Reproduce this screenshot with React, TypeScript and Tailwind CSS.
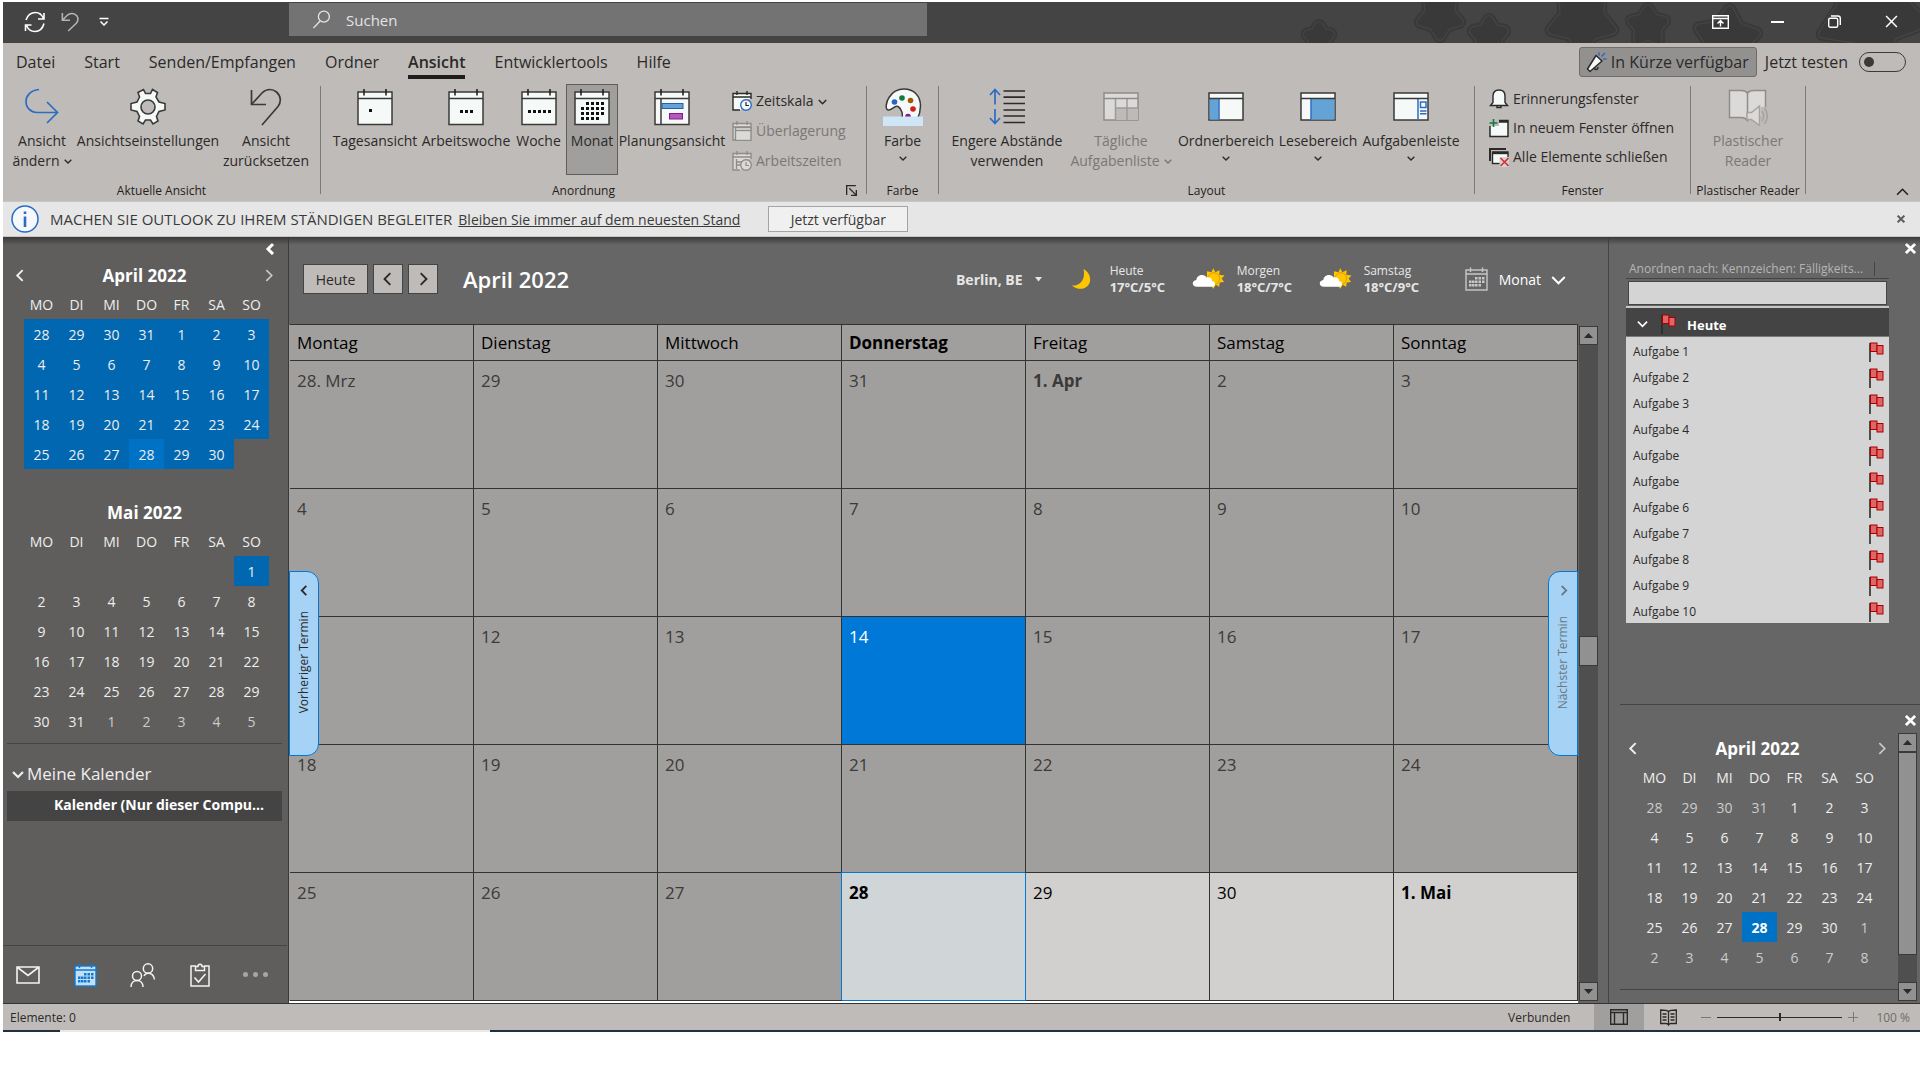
import type { ReactNode } from "react";

const WEEKDAYS_SHORT = ["MO", "DI", "MI", "DO", "FR", "SA", "SO"];
const WEEKDAYS = ["Montag", "Dienstag", "Mittwoch", "Donnerstag", "Freitag", "Samstag", "Sonntag"];

const APRIL = [
  ["28", "29", "30", "31", "1", "2", "3"],
  ["4", "5", "6", "7", "8", "9", "10"],
  ["11", "12", "13", "14", "15", "16", "17"],
  ["18", "19", "20", "21", "22", "23", "24"],
  ["25", "26", "27", "28", "29", "30", ""],
];

const APRIL_FULL = [
  ...APRIL.slice(0, 4),
  ["25", "26", "27", "28", "29", "30", "1"],
  ["2", "3", "4", "5", "6", "7", "8"],
];

const MAI = [
  ["", "", "", "", "", "", "1"],
  ["2", "3", "4", "5", "6", "7", "8"],
  ["9", "10", "11", "12", "13", "14", "15"],
  ["16", "17", "18", "19", "20", "21", "22"],
  ["23", "24", "25", "26", "27", "28", "29"],
  ["30", "31", "1", "2", "3", "4", "5"],
];

const MONTH = [
  ["28. Mrz", "29", "30", "31", "1. Apr", "2", "3"],
  ["4", "5", "6", "7", "8", "9", "10"],
  ["11", "12", "13", "14", "15", "16", "17"],
  ["18", "19", "20", "21", "22", "23", "24"],
  ["25", "26", "27", "28", "29", "30", "1. Mai"],
];

const TASKS = [
  "Aufgabe 1",
  "Aufgabe 2",
  "Aufgabe 3",
  "Aufgabe 4",
  "Aufgabe",
  "Aufgabe",
  "Aufgabe 6",
  "Aufgabe 7",
  "Aufgabe 8",
  "Aufgabe 9",
  "Aufgabe 10",
];

/* ---------- ICONS ---------- */

function Chevron({ dir, size = 12, width = 2 }: { dir: "left" | "right" | "down" | "up"; size?: number; width?: number }) {
  const paths = {
    left: "M8 1 L3 6 L8 11",
    right: "M4 1 L9 6 L4 11",
    down: "M1 4 L6 9 L11 4",
    up: "M1 9 L6 4 L11 9",
  };
  return (
    <svg width={size} height={size} viewBox="0 0 12 12" fill="none" stroke="currentColor" strokeWidth={width}>
      <path d={paths[dir]} />
    </svg>
  );
}

function CloseIcon({ size = 11, width = 3 }: { size?: number; width?: number }) {
  return (
    <svg width={size} height={size} viewBox="0 0 12 12" stroke="currentColor" strokeWidth={width}>
      <path d="M1 1 L11 11 M11 1 L1 11" />
    </svg>
  );
}

function CalendarFrame({ children }: { children?: ReactNode }) {
  return (
    <svg width="36" height="38" viewBox="0 0 36 38">
      <rect x="1" y="4" width="34" height="32.5" fill="#f5f9f8" stroke="#3b3a39" strokeWidth="1.5" />
      <path d="M1 10.5 H35" stroke="#3b3a39" strokeWidth="1.5" />
      <path d="M7 1 V7.5 M29 1 V7.5" stroke="#1b1a19" strokeWidth="1.5" />
      {children}
    </svg>
  );
}

function Dots({ points }: { points: number[][] }) {
  return (
    <>
      {points.map(([x, y]) => (
        <rect key={`${x}-${y}`} x={x} y={y} width="3" height="3" fill="#111" />
      ))}
    </>
  );
}

const MONTH_DOTS = [
  [12, 14], [17, 14], [22, 14], [27, 14],
  [7, 19], [12, 19], [17, 19], [22, 19], [27, 19],
  [7, 24], [12, 24], [17, 24], [22, 24], [27, 24],
  [7, 29], [12, 29], [17, 29], [22, 29],
];

function ChangeViewIcon() {
  return (
    <svg width="36" height="38" viewBox="0 0 36 38" fill="none" stroke="#2b6cc4" strokeWidth="1.7">
      <path d="M15 1.5 C6 2.5 2 8 2 13.5 C2 20 7 24.5 13 24.5 H33" />
      <path d="M23 14 L33.5 24.5 L23 35" />
    </svg>
  );
}

function GearIcon() {
  return (
    <svg width="36" height="38" viewBox="0 0 36 38" fill="#f5f9f8" stroke="#3b3a39" strokeWidth="1.6">
      <path d="M13.5 1.5 L15.5 5.5 H20.5 L22.5 1.5 L27.5 4.5 L26 9 L29 14 L35 15.5 V22 L29 23.5 L26.5 28.5 L28 33 L23 36 L20.5 32 H15.5 L13 36 L8 33 L9.5 28.5 L7 23.5 L1 22 V15.5 L7 14 L9.5 9 L8 4.5 Z" />
      <circle cx="18" cy="19" r="7" fill="#bfbbb8" />
    </svg>
  );
}

function ResetIcon() {
  return (
    <svg width="36" height="38" viewBox="0 0 36 38" fill="none" stroke="#3b3a39" strokeWidth="1.7">
      <path d="M3.5 2 V16.5 H18" />
      <path d="M3.5 16.5 L14 5 C19 0 25 1 28.5 4 C33 8 33.5 14 30 18.5 L14 37" />
    </svg>
  );
}

function PaletteIcon() {
  return (
    <svg width="40" height="38" viewBox="0 0 40 38">
      <path
        d="M5 22 C2 21 3 14 6 9.5 C10 3 16 1 21 1 C31 1 37.5 8 37.5 18 C37.5 24 36 28 34 32 H18 C21 27 19 21 15 18.5 C11 17 9 23 5 22 Z"
        fill="#f5f9f8"
        stroke="#3b3a39"
        strokeWidth="1.5"
      />
      <circle cx="11.5" cy="14" r="2.8" fill="#2b62c4" />
      <circle cx="19" cy="10" r="2.8" fill="#107c41" />
      <circle cx="27.5" cy="12.5" r="2.8" fill="#a05a00" />
      <circle cx="30" cy="21" r="2.8" fill="#d0201a" />
      <circle cx="25" cy="28.5" r="2.8" fill="#881798" />
      <rect x="0" y="28.5" width="40" height="9.5" fill="#cfe6f7" />
    </svg>
  );
}

function SpacingIcon() {
  return (
    <svg width="36" height="38" viewBox="0 0 36 38" fill="none" strokeWidth="1.7">
      <path d="M14.5 3 H36 M14.5 9.2 H36 M14.5 15.5 H36 M14.5 22 H36 M14.5 28 H36 M14.5 34.5 H36" stroke="#2b2a29" />
      <path d="M6 2 V16.5 M1 7 L6 1.5 L11 7 M6 21 V35.5 M1 30 L6 35.5 L11 30" stroke="#2b6cc4" />
    </svg>
  );
}

function PaneIcon({ children, muted }: { children?: ReactNode; muted?: boolean }) {
  const stroke = muted ? "#8f8d8b" : "#3b3a39";
  return (
    <svg width="36" height="38" viewBox="0 0 36 38">
      <rect x="1" y="5" width="34" height="27" fill={muted ? "#dcdad8" : "#f5f9f8"} stroke={stroke} strokeWidth="1.5" />
      {children}
      <path d="M1 10.5 H35" stroke={stroke} strokeWidth="1.5" />
    </svg>
  );
}

function ReaderIcon() {
  return (
    <svg width="40" height="38" viewBox="0 0 40 38" fill="#dcdad8" stroke="#8f8d8b" strokeWidth="1.5">
      <path d="M19.5 5 C18 3 16 2.5 13 2.5 H1.5 V29.5 H13 C16 29.5 18 30.5 19.5 32.5 C20.5 30.5 23 29.5 26 29.5 H37.5 V2.5 H26 C23 2.5 21 3 19.5 5 Z" />
      <path d="M19.5 5 V32" />
      <path d="M19 24.5 H23.5 L31.5 18 V37.5 L23.5 31.5 H19 Z" stroke="#a5a3a1" />
      <path d="M32.5 19 H40 V37.500 H32.5 Z" fill="#bfbbb8" stroke="none" />
      <path d="M34 23 C36 26 36 30 34 33 M36.5 20 C40 25 40 31 36.5 36" fill="none" stroke="#a5a3a1" />
    </svg>
  );
}

function SmallCalendar({ muted, clock, second }: { muted?: boolean; clock?: boolean; second?: boolean }) {
  const stroke = muted ? "#8f8d8b" : "#2b2a29";
  const fill = muted ? "#dcdad8" : "#f5f9f8";
  return (
    <svg width="20" height="20" viewBox="0 0 20 20" fill="none" stroke={stroke} strokeWidth="1.4">
      <path d="M1 2.5 H19 V19 H1 Z" fill={fill} stroke="none" />
      <path d="M19 8 V2.5 H1 V19 H8 M1 6 H19 M5 0 V4 M15 0 V4" />
      {second && (
        <>
          <rect x="3.5" y="6.5" width="15.5" height="13" fill={fill} />
          <path d="M3.5 9.5 H19" />
        </>
      )}
      {!second && !clock && <path d="M4.5 8 V18 M5 11 H10 M5 14 H9" />}
      {!second && <path d="M9 20 V15 L13 8 H20 V20 Z" fill="#bfbbb8" stroke="none" />}
      {!second && <circle cx="14" cy="14" r="5.3" fill={fill} stroke={muted ? "#8f8d8b" : "#2b6cc4"} />}
      {!second && <path d="M14 11 V14.5 H17" strokeWidth="1.2" />}
    </svg>
  );
}

function BellIcon() {
  return (
    <svg width="20" height="20" viewBox="0 0 20 20" fill="#f5f9f8" stroke="#2b2a29" strokeWidth="1.4">
      <path d="M1.5 16.5 L4 13.5 V7 C4 3 6.5 1 10 1 C13.5 1 16 3 16 7 V13.5 L18.5 16.5 Z" />
      <path d="M8 17 V18.5 H12 V17" fill="none" />
    </svg>
  );
}

function NewWindowIcon() {
  return (
    <svg width="20" height="20" viewBox="0 0 20 20">
      <path d="M1 8 V18.5 H19 V2.5 H10 V8 Z" fill="#f5f9f8" />
      <path d="M1 8 V18.5 H19 V2.5 H10" fill="none" stroke="#2b2a29" strokeWidth="1.5" />
      <path d="M10 3.5 H19" stroke="#2b2a29" strokeWidth="2.5" />
      <path d="M4.5 1 V9 M0.5 5 H8.5" stroke="#107c41" strokeWidth="1.6" />
    </svg>
  );
}

function CloseAllIcon() {
  return (
    <svg width="20" height="20" viewBox="0 0 20 20" fill="none">
      <path d="M1 14 V2 H17" stroke="#2b2a29" strokeWidth="2" />
      <rect x="3.5" y="5" width="15.5" height="11.5" fill="#f5f9f8" stroke="#2b2a29" strokeWidth="1.4" />
      <path d="M3.5 6 H19" stroke="#2b2a29" strokeWidth="2.4" />
      <path d="M10.5 10 H20 V20 H10.5 Z" fill="#d5d2d0" />
      <path d="M11.5 11 L19.5 19 M19.5 11 L11.5 19" stroke="#d13438" strokeWidth="1.6" />
    </svg>
  );
}

function FlagIcon() {
  return (
    <svg width="15" height="20" viewBox="0 0 15 20">
      <path d="M1 1 V20" stroke="#2b2a29" strokeWidth="1.6" />
      <rect x="1.5" y="1" width="6.5" height="8.5" fill="#e06666" stroke="#a80000" />
      <rect x="8" y="3.5" width="6" height="8.5" fill="#e06666" stroke="#a80000" />
    </svg>
  );
}

function MoonIcon() {
  return (
    <svg width="20" height="22" viewBox="0 0 20 22">
      <path d="M12.5 1 C18 4 20.5 10 18.5 15 C16 21.5 7 23 1 17.5 C8 18.5 15 12 12.5 1 Z" fill="#ffc600" />
    </svg>
  );
}

function SunCloudIcon() {
  return (
    <svg width="34" height="22" viewBox="0 0 34 22">
      <path
        d="M22 0 L24 4 L28.5 2 L28 6.5 L33.5 7.5 L30.5 10.5 L33 14 L28.5 14.5 L28 19 L24.5 17 L22 21 L19 17 L15 18 L15.5 3 L20 4 Z"
        fill="#ffc600"
      />
      <circle cx="22.5" cy="10.5" r="6" fill="#ffc600" stroke="#d99a00" strokeWidth="1" />
      <path d="M5 19 C0 19 -1 13 4.5 12 C5 7 12 5 15 9.5 C19 8.5 21 11.5 20.5 13 C25 13.5 24.5 19 21 19 Z" fill="#fff" />
    </svg>
  );
}

function CalendarSmallGrid({ color, fill }: { color: string; fill: string }) {
  const cells = [
    [10, 10], [13.5, 10], [17, 10],
    [4, 13.5], [7, 13.5], [10, 13.5], [13.5, 13.5], [17, 13.5],
    [4, 17], [7, 17], [10, 17], [13.5, 17],
  ];
  return (
    <svg width="23" height="24" viewBox="0 0 23 24">
      <rect x="1" y="3" width="21" height="20" fill={fill} stroke={color} strokeWidth="1.4" />
      <path d="M1 7 H22 M5.5 0.5 V5 M17.5 0.5 V5" stroke={color} strokeWidth="1.4" />
      {cells.map(([x, y]) => (
        <rect key={`${x}-${y}`} x={x} y={y} width="2.5" height="2.5" fill={color} />
      ))}
    </svg>
  );
}

function starPoints(cx: number, cy: number, r: number, turn: number) {
  return Array.from({ length: 10 }, (_, i) => {
    const radius = i % 2 ? r * 0.58 : r;
    const angle = (Math.PI / 5) * i - Math.PI / 2 + (turn * Math.PI) / 180;
    return `${(cx + radius * Math.cos(angle)).toFixed(1)},${(cy + radius * Math.sin(angle)).toFixed(1)}`;
  }).join(" ");
}

const STARS = [
  [59, 36, 12, 0],
  [180, 14, 20, 36],
  [229, 34, 16, 0],
  [322, 18, 32, 36],
  [388, 24, 17, 0],
  [467, 38, 30, 5],
  [612, 10, 54, 30],
];

function TitleStars() {
  return (
    <svg className="absolute right-0 top-0" width="660" height="41" viewBox="0 0 660 41" strokeLinejoin="round">
      {STARS.map(([x, y, r, turn]) => {
        const points = starPoints(x, y, r, turn);
        return (
          <g key={x}>
            <polygon points={points} fill="#393939" stroke="#393939" strokeWidth="14" />
            <polygon points={points} fill="#434343" stroke="#434343" strokeWidth="10" />
            <polygon points={points} fill="#393939" stroke="#393939" strokeWidth="7" />
          </g>
        );
      })}
    </svg>
  );
}

/* ---------- TITLE BAR ---------- */

function TitleBar() {
  const control = "flex h-full w-[57px] items-center justify-center";
  return (
    <header className="relative flex h-[41px] bg-[#444444] text-white">
      <TitleStars />
      <div className="relative flex w-[286px] shrink-0 items-center pl-[21px] pb-px">
        <button aria-label="Senden/Empfangen" className="mr-[15px]">
          <svg width="22" height="22" viewBox="0 0 22 22" fill="none" stroke="currentColor" strokeWidth="1.6">
            <path d="M2 9 C4 3 8 1.5 11.5 1.5 C15 1.5 18 4 19.5 7.5 M20 2 V8 H14" />
            <path d="M20 12.5 C18.5 18 15 20.5 11 20.5 C7 20.5 4 18 2.5 14.5 M1.5 20 V14 H7.5" />
          </svg>
        </button>
        <button aria-label="Rückgängig" className="mr-[20px] text-[#b5b5b5]">
          <svg width="18" height="22" viewBox="0 0 20 22" fill="none" stroke="currentColor" strokeWidth="1.7">
            <path d="M1.5 1 V9 H10 M1.5 9 L7 3.5 C10 0.5 15 1 17.5 4 C19.5 7 19 10 17 12.5 L8 21" />
          </svg>
        </button>
        <button aria-label="Symbolleiste anpassen">
          <svg width="10" height="10" viewBox="0 0 10 10" fill="none" stroke="currentColor" strokeWidth="1.5">
            <path d="M0.5 1.5 H9.5 M1.5 4.5 L5 8 L8.5 4.5" />
          </svg>
        </button>
      </div>
      <label className="relative mt-px flex h-[33px] w-[638px] items-center bg-[#737373] pl-6">
        <svg width="18" height="20" viewBox="0 0 18 20" fill="none" stroke="#e3e3e3" strokeWidth="1.4">
          <circle cx="11.5" cy="6.5" r="5.8" />
          <path d="M7.5 11 L0.5 18.5" />
        </svg>
        <input
          aria-label="Suchen"
          placeholder="Suchen"
          className="ml-4 w-full bg-transparent pt-[2px] text-[15px] text-white outline-none placeholder:text-[#e3e3e3]"
        />
      </label>
      <div className="relative ml-auto flex pb-[2px]">
        <button aria-label="Menüband anzeigen" className={control}>
          <svg width="17" height="14" viewBox="0 0 17 14" fill="none" stroke="currentColor" strokeWidth="1.4">
            <path d="M0.7 0.7 H16.3 V13.3 H0.7 Z M0.7 3.5 H16.3 M8.5 11.5 V5.5 M5.5 8.5 L8.5 5.5 L11.5 8.5" />
          </svg>
        </button>
        <button aria-label="Minimieren" className={control}>
          <span className="h-[2px] w-[13px] bg-white" />
        </button>
        <button aria-label="Wiederherstellen" className={control}>
          <svg width="13" height="13" viewBox="0 0 13 13" fill="none" stroke="currentColor" strokeWidth="1.4">
            <rect x="0.7" y="3.2" width="9" height="9" rx="1.5" />
            <path d="M3 1 H10 C11.5 1 12.3 2 12.3 3.2 V10" />
          </svg>
        </button>
        <button aria-label="Schließen" className={control}>
          <CloseIcon size={13} width={1.4} />
        </button>
      </div>
    </header>
  );
}

/* ---------- RIBBON ---------- */

function Tabs() {
  const tabs = ["Datei", "Start", "Senden/Empfangen", "Ordner", "Ansicht", "Entwicklertools", "Hilfe"];
  return (
    <div className="flex h-[41px] items-start pl-[13px] text-[16px] text-[#2b2a29]">
      <nav className="flex gap-[29px] pt-[4px]">
        {tabs.map((tab) => (
          <button
            key={tab}
            className={
              tab === "Ansicht"
                ? "h-[32px] border-b-4 border-[#1f1e1d] pt-px font-semibold"
                : "h-[32px] border-b-4 border-transparent pt-px"
            }
          >
            {tab}
          </button>
        ))}
      </nav>
      <div className="ml-auto flex items-center pt-1 pr-[14px]">
        <button className="flex h-[30px] w-[178px] items-center gap-1 whitespace-nowrap rounded-[3px] border border-[#6f6d6b] bg-[#939190] pl-[6px]">
          <svg width="21" height="21" viewBox="0 0 21 21" className="shrink-0">
            <path d="M8 15 C8 18 12 18.5 12 15" fill="none" stroke="#2b2a29" strokeWidth="1.5" />
            <path d="M1.5 17 L10 3.5 L16 9 L4 19.5 Z" fill="#f5f9f8" stroke="#2b2a29" strokeWidth="1.5" strokeLinejoin="round" />
            <path d="M13 3.5 V0.5 M15.5 4.5 L19 1 M17 7 H20.5" stroke="#2b6cc4" strokeWidth="1.6" />
          </svg>
          In Kürze verfügbar
        </button>
        <label className="ml-[8px] flex items-center gap-[11px] whitespace-nowrap">
          Jetzt testen
          <input
            type="checkbox"
            className="flex h-[20px] w-[47px] appearance-none items-center rounded-full border border-[#3b3a39] pl-1 before:h-[10px] before:w-[10px] before:rounded-full before:bg-[#3b3a39]"
          />
        </label>
      </div>
    </div>
  );
}

function Group({
  label,
  width,
  launcher,
  children,
}: {
  label: string;
  width: string;
  launcher?: boolean;
  children: ReactNode;
}) {
  return (
    <>
      <section className={`flex flex-col ${width}`}>
        <div className="flex h-[91px] shrink-0">{children}</div>
        <div className="flex h-[26px] w-full shrink-0 items-center pt-[5px]">
          <h2 className="flex-1 text-center whitespace-nowrap text-[12px] text-[#1f1e1d]">{label}</h2>
          {launcher && (
            <button aria-label={`${label}: Optionen`} className="w-[20px] shrink-0">
              <svg width="11" height="11" viewBox="0 0 10 10" fill="none" stroke="#2b2a29" strokeWidth="1.2">
                <path d="M0.6 9 V0.6 H9 M3 3 L9 9 M9.4 4.5 V9.4 H4.5" />
              </svg>
            </button>
          )}
        </div>
      </section>
      <div className="mt-[2px] mb-[7px] w-px shrink-0 bg-[#7d7b79]" />
    </>
  );
}

type BigButtonProps = {
  icon: ReactNode;
  lines: string[];
  width: string;
  chevron?: "inline" | "below";
  muted?: boolean;
  active?: boolean;
};

function BigButton({ icon, lines, width, chevron, muted, active }: BigButtonProps) {
  return (
    <button
      disabled={muted}
      className={`flex h-[91px] shrink-0 flex-col items-center border pt-[3px] text-[14px] leading-[20px] whitespace-nowrap ${width} ${
        active ? "border-[#5f5e5c] bg-[#a09f9d]" : "border-transparent"
      } ${muted ? "text-[#7a7876]" : "text-[#2b2a29]"}`}
    >
      <span className="mb-[5px] flex h-[38px]">{icon}</span>
      {lines.map((line, i) => (
        <span key={line} className="flex items-center gap-1">
          {line}
          {chevron === "inline" && i === lines.length - 1 && <Chevron dir="down" size={8} width={2} />}
        </span>
      ))}
      {chevron === "below" && (
        <span className="mt-[3px]">
          <Chevron dir="down" size={8} width={2} />
        </span>
      )}
    </button>
  );
}

function SmallButton({ icon, label, chevron, muted }: { icon: ReactNode; label: string; chevron?: boolean; muted?: boolean }) {
  return (
    <button
      disabled={muted}
      className={`flex items-center gap-1 whitespace-nowrap text-[14px] leading-[20px] ${muted ? "text-[#7a7876]" : "text-[#2b2a29]"}`}
    >
      {icon}
      {label}
      {chevron && <Chevron dir="down" size={9} width={2} />}
    </button>
  );
}

function Ribbon() {
  return (
    <div className="h-[158px] bg-[#bfbbb8]">
      <Tabs />
      <div className="flex h-[117px]">
        <Group label="Aktuelle Ansicht" width="w-[317px]">
          <div className="w-[6px]" />
          <BigButton icon={<ChangeViewIcon />} lines={["Ansicht", "ändern"]} width="w-[66px]" chevron="inline" />
          <BigButton icon={<GearIcon />} lines={["Ansichtseinstellungen"]} width="w-[146px]" />
          <BigButton icon={<ResetIcon />} lines={["Ansicht", "zurücksetzen"]} width="w-[90px]" />
        </Group>

        <Group label="Anordnung" width="w-[545px]" launcher>
          <div className="w-[8px]" />
          <BigButton icon={<CalendarFrame><Dots points={[[12, 21]]} /></CalendarFrame>} lines={["Tagesansicht"]} width="w-[92px]" />
          <BigButton
            icon={<CalendarFrame><Dots points={[[12, 22], [17, 22], [22, 22]]} /></CalendarFrame>}
            lines={["Arbeitswoche"]}
            width="w-[90px]"
          />
          <BigButton
            icon={<CalendarFrame><Dots points={[[7, 22], [12, 22], [17, 22], [22, 22], [27, 22]]} /></CalendarFrame>}
            lines={["Woche"]}
            width="w-[55px]"
          />
          <BigButton icon={<CalendarFrame><Dots points={MONTH_DOTS} /></CalendarFrame>} lines={["Monat"]} width="w-[52px]" active />
          <BigButton
            icon={
              <CalendarFrame>
                <path d="M7 10 V36" stroke="#3b3a39" strokeWidth="1.5" />
                <rect x="8" y="15.5" width="21" height="5" fill="#63a3d5" stroke="#2b5ea8" />
                <rect x="15.5" y="25.5" width="13" height="5.5" fill="#b558b8" stroke="#881798" />
              </CalendarFrame>
            }
            lines={["Planungsansicht"]}
            width="w-[108px]"
          />
          <div className="ml-[6px] flex flex-col gap-[10px] pt-[7px]">
            <SmallButton icon={<SmallCalendar clock />} label="Zeitskala" chevron />
            <SmallButton icon={<SmallCalendar muted second />} label="Überlagerung" muted />
            <SmallButton icon={<SmallCalendar muted />} label="Arbeitszeiten" muted />
          </div>
        </Group>

        <Group label="Farbe" width="w-[71px] items-center">
          <BigButton icon={<PaletteIcon />} lines={["Farbe"]} width="w-[60px]" chevron="below" />
        </Group>

        <Group label="Layout" width="w-[535px]">
          <div className="w-[7px]" />
          <BigButton icon={<SpacingIcon />} lines={["Engere Abstände", "verwenden"]} width="w-[122px]" />
          <BigButton
            icon={
              <PaneIcon muted>
                <path d="M12.5 20 H35 V32 H12.5 Z" fill="#bdbbb9" />
                <path d="M12.5 10.5 V32 M24 10.5 V32 M12.5 20 H35" stroke="#9d9b99" strokeWidth="1.5" />
              </PaneIcon>
            }
            lines={["Tägliche", "Aufgabenliste"]}
            width="w-[106px]"
            chevron="inline"
            muted
          />
          <BigButton
            icon={
              <PaneIcon>
                <rect x="1.7" y="10.5" width="9" height="21" fill="#63a3d5" />
                <path d="M11 10.5 V31.5" stroke="#2b6cc4" strokeWidth="1.5" />
              </PaneIcon>
            }
            lines={["Ordnerbereich"]}
            width="w-[104px]"
            chevron="below"
          />
          <BigButton
            icon={
              <PaneIcon>
                <rect x="11" y="10.5" width="23.5" height="21" fill="#63a3d5" />
                <path d="M11 10.5 V31.5" stroke="#2b6cc4" strokeWidth="1.5" />
              </PaneIcon>
            }
            lines={["Lesebereich"]}
            width="w-[80px]"
            chevron="below"
          />
          <BigButton
            icon={
              <PaneIcon>
                <path d="M25 10.5 V31.5 M27 23 H33.5 M27 25.7 H33.5" stroke="#2b6cc4" strokeWidth="1.5" />
                <rect x="27.5" y="14" width="5.5" height="5.5" fill="none" stroke="#2b6cc4" strokeWidth="1.5" />
              </PaneIcon>
            }
            lines={["Aufgabenleiste"]}
            width="w-[106px]"
            chevron="below"
          />
        </Group>

        <Group label="Fenster" width="w-[215px]">
          <div className="ml-[14px] flex flex-col gap-[9px] pt-[5px]">
            <SmallButton icon={<BellIcon />} label="Erinnerungsfenster" />
            <SmallButton icon={<NewWindowIcon />} label="In neuem Fenster öffnen" />
            <SmallButton icon={<CloseAllIcon />} label="Alle Elemente schließen" />
          </div>
        </Group>

        <Group label="Plastischer Reader" width="w-[114px] items-center">
          <BigButton icon={<ReaderIcon />} lines={["Plastischer", "Reader"]} width="w-[100px]" muted />
        </Group>

        <button aria-label="Menüband reduzieren" className="mt-auto mr-[11px] mb-[3px] ml-auto text-[#1f1e1d]">
          <Chevron dir="up" size={13} width={1.4} />
        </button>
      </div>
    </div>
  );
}

function InfoBar() {
  return (
    <div className="flex h-[36px] items-center border-y border-[#c8c6c4] bg-[#e6e6e6] text-[14px] text-[#3b3a39]">
      <svg width="28" height="28" viewBox="0 0 28 28" className="ml-2 shrink-0">
        <circle cx="14" cy="14" r="13" fill="#f5f9fc" stroke="#2b6cc4" strokeWidth="1.5" />
        <path d="M14 11.5 V22 M14 6.5 V9" stroke="#2b6cc4" strokeWidth="2.6" />
      </svg>
      <span className="ml-[11px] text-[15px]">MACHEN SIE OUTLOOK ZU IHREM STÄNDIGEN BEGLEITER</span>
      <a href="#stand" className="ml-[6px] underline">
        Bleiben Sie immer auf dem neuesten Stand
      </a>
      <button className="ml-[28px] h-[26px] w-[140px] border border-[#a6a4a2] bg-[#f0f0f0]">Jetzt verfügbar</button>
      <button aria-label="Hinweis schließen" className="mr-[15px] ml-auto text-[#5f5e5c]">
        <CloseIcon size={8} width={3} />
      </button>
    </div>
  );
}

/* ---------- MINI MONTH ---------- */

type MiniMonthProps = {
  title: string;
  weeks: string[][];
  arrows?: boolean;
  cellClass: (week: number, day: number, label: string) => string;
};

function MiniMonth({ title, weeks, arrows, cellClass }: MiniMonthProps) {
  return (
    <div className="w-[245px] text-[14px] text-[#eeeeee]">
      <div className="-mx-3 flex h-[28px] items-center justify-between pt-px">
        <button aria-label="Vorheriger Monat" className={arrows ? "flex w-5 justify-center pr-1" : "invisible w-5"}>
          <Chevron dir="left" size={13} width={1.8} />
        </button>
        <h3 className="text-[17px] font-bold text-white">{title}</h3>
        <button aria-label="Nächster Monat" className={arrows ? "flex w-6 justify-center text-[#cccccc]" : "invisible w-6"}>
          <Chevron dir="right" size={13} width={1.5} />
        </button>
      </div>
      <table className="w-full table-fixed border-separate border-spacing-0">
        <thead>
          <tr className="h-[30px]">
            {WEEKDAYS_SHORT.map((day) => (
              <th key={day} className="p-0 font-normal">
                {day}
              </th>
            ))}
          </tr>
        </thead>
        <tbody>
          {weeks.map((week, w) => (
            <tr key={w} className="h-[30px]">
              {week.map((label, d) => (
                <td key={d} className={`p-0 text-center ${cellClass(w, d, label)}`}>
                  {label}
                </td>
              ))}
            </tr>
          ))}
        </tbody>
      </table>
    </div>
  );
}

/* ---------- LEFT SIDEBAR ---------- */

function Sidebar() {
  return (
    <aside className="flex w-[286px] shrink-0 flex-col border-r border-[#3b3a39] bg-[#5f5e5c] text-white">
      <div className="flex h-[24px] items-center justify-end pr-[11px]">
        <button aria-label="Ordnerbereich minimieren">
          <Chevron dir="left" size={12} width={3} />
        </button>
      </div>
      <div className="pl-[21px]">
        <MiniMonth
          title="April 2022"
          weeks={APRIL}
          arrows
          cellClass={(w, d, label) => (!label ? "" : w === 4 && d === 3 ? "bg-[#0072c6]" : "bg-[#0067b0]")}
        />
        <div className="h-[29px]" />
        <MiniMonth
          title="Mai 2022"
          weeks={MAI}
          cellClass={(w, d) => (w === 0 && d === 6 ? "bg-[#0067b0]" : w === 5 && d > 1 ? "text-[#cccccc]" : "")}
        />
      </div>
      <div className="mt-[7px] mr-[6px] ml-1 border-t border-[#444444] pt-[13px]">
        <button className="flex h-[34px] items-center gap-[3px] pl-[5px] text-[17px] text-[#eeeeee]">
          <Chevron dir="down" size={12} width={2.2} />
          Meine Kalender
        </button>
        <button className="block h-[30px] w-full truncate bg-[#444444] pr-3 pb-[3px] pl-[47px] text-left text-[14px] font-bold">
          Kalender (Nur dieser Compu...
        </button>
      </div>
      <nav className="mt-auto mr-px flex h-[58px] items-center justify-between border-t border-[#444444] pr-[19px] pl-[13px]">
        <button aria-label="E-Mail">
          <svg width="24" height="18" viewBox="0 0 24 18" fill="none" stroke="#f3f3f3" strokeWidth="1.6">
            <path d="M1 1 H23 V17 H1 Z M1 1 L12 9.5 L23 1" />
          </svg>
        </button>
        <button aria-label="Kalender">
          <CalendarSmallGrid color="#1079d0" fill="#c3dff5" />
        </button>
        <button aria-label="Personen">
          <svg width="26" height="24" viewBox="0 0 26 24" fill="none" stroke="#f3f3f3" strokeWidth="1.5">
            <circle cx="18" cy="5.5" r="4.7" />
            <circle cx="7" cy="13" r="4.5" />
            <path d="M1 24 C1 19.5 4 17.5 7 17.5 C10 17.5 13 19.5 13 24 M14 13 C15 11 16.5 10.2 18 10.2 C21.5 10.2 24 12.5 24.5 16.5" />
          </svg>
        </button>
        <button aria-label="Aufgaben">
          <svg width="20" height="24" viewBox="0 0 20 24" fill="none" stroke="#f3f3f3" strokeWidth="1.5">
            <path d="M6 3 H1 V23 H19 V3 H14 M5.5 7.5 V3.5 H8 C8 0.5 12 0.5 12 3.5 H14.5 V7.5 Z M4.5 14.5 L8.5 19 L15.5 11" />
          </svg>
        </button>
        <button aria-label="Weitere" className="flex gap-[5px]">
          <span className="h-[5px] w-[5px] rounded-full bg-[#a6a6a6]" />
          <span className="h-[5px] w-[5px] rounded-full bg-[#a6a6a6]" />
          <span className="h-[5px] w-[5px] rounded-full bg-[#a6a6a6]" />
        </button>
      </nav>
    </aside>
  );
}

/* ---------- CALENDAR ---------- */

function Weather({ icon, day, temps }: { icon: ReactNode; day: string; temps: string }) {
  return (
    <div className="flex items-center text-[12px] leading-[17px] text-[#e6e6e6]">
      <span className="flex w-[45px] justify-center pr-3">{icon}</span>
      <span className="w-[82px] whitespace-nowrap">
        {day}
        <br />
        <b className="text-[13px]">{temps}</b>
      </span>
    </div>
  );
}

function CalendarHeader() {
  const box = "flex h-[30px] items-center justify-center border border-[#444444] bg-[#bfbbb8] text-[14px] text-[#2b2a29]";
  return (
    <div className="flex h-[87px] items-center pr-[42px] pb-[3px] pl-[14px] text-white">
      <button className={`${box} w-[65px]`}>Heute</button>
      <button aria-label="Zurück" className={`${box} ml-[5px] w-[30px]`}>
        <Chevron dir="left" size={14} width={1.6} />
      </button>
      <button aria-label="Vorwärts" className={`${box} ml-[5px] w-[30px]`}>
        <Chevron dir="right" size={14} width={1.6} />
      </button>
      <h1 className="ml-[25px] whitespace-nowrap text-[22px] font-semibold">April 2022</h1>
      <div className="ml-auto flex items-center">
        <button className="mr-[23px] flex items-center gap-3 text-[14px] font-bold text-[#e6e6e6]">
          Berlin, BE
          <svg width="7" height="5" viewBox="0 0 7 5" fill="currentColor">
            <path d="M0 0 H7 L3.5 4.5 Z" />
          </svg>
        </button>
        <Weather icon={<MoonIcon />} day="Heute" temps="17°C/5°C" />
        <Weather icon={<SunCloudIcon />} day="Morgen" temps="18°C/7°C" />
        <Weather icon={<SunCloudIcon />} day="Samstag" temps="18°C/9°C" />
        <button className="ml-[19px] flex items-center text-[14px]">
          <CalendarSmallGrid color="#c8c8c8" fill="none" />
          <span className="mr-[10px] ml-[11px]">Monat</span>
          <Chevron dir="down" size={15} width={1.6} />
        </button>
      </div>
    </div>
  );
}

function dayClass(week: number, day: number, label: string) {
  const bold = label.includes("Apr") || label.includes("Mai") ? "font-bold" : "";
  if (week === 2 && day === 3) return "border-[#333333] bg-[#0078d7] text-white";
  if (week === 4 && day === 3)
    return "relative border-[#0078d7] bg-[#d0d5d8] font-bold text-black shadow-[-1px_-1px_0_#0078d7]";
  if (week === 4 && day > 3) return `border-[#333333] bg-[#d1d0ce] text-black ${bold}`;
  return `border-[#333333] bg-[#a09f9d] text-[#3b3a39] ${bold}`;
}

function ScrollArrow({ dir, label }: { dir: "up" | "down"; label: string }) {
  return (
    <button aria-label={label} className="flex h-[19px] shrink-0 items-center justify-center border border-[#3b3a39] bg-[#919191] text-[#2b2a29]">
      <svg width="9" height="5" viewBox="0 0 9 5" fill="currentColor">
        <path d={dir === "up" ? "M0 5 H9 L4.5 0 Z" : "M0 0 H9 L4.5 5 Z"} />
      </svg>
    </button>
  );
}

function MonthGrid() {
  return (
    <table className="w-full table-fixed border-separate border-spacing-0 border-t border-l border-t-[#333333] border-l-[#a09f9d] text-[17px]">
      <thead>
        <tr>
          {WEEKDAYS.map((day) => (
            <th
              key={day}
              className={`h-[36px] border-r border-b border-[#333333] bg-[#a09f9d] px-[7px] pt-px pb-0 text-left text-black ${
                day === "Donnerstag" ? "font-bold" : "font-normal"
              }`}
            >
              {day}
            </th>
          ))}
        </tr>
      </thead>
      <tbody>
        {MONTH.map((week, w) => (
          <tr key={w}>
            {week.map((label, d) => (
              <td key={d} className={`h-[128px] border-r border-b px-[7px] pt-2 pb-0 align-top leading-6 ${dayClass(w, d, label)}`}>
                {label}
              </td>
            ))}
          </tr>
        ))}
      </tbody>
    </table>
  );
}

function Calendar() {
  const tab = "absolute top-[247px] flex h-[185px] w-[30px] flex-col items-center border border-[#0078d7] bg-[#a6d3f5] pt-[13px] text-[12px]";
  return (
    <main className="min-w-0 flex-1 bg-[#666666]">
      <CalendarHeader />
      <div className="flex pr-[10px]">
        <div className="relative min-w-0 flex-1 border-b-2 border-white">
          <MonthGrid />
          <button className={`${tab} left-0 rounded-r-xl text-[#2b2a29]`}>
            <Chevron dir="left" size={11} width={2} />
            <span className="mt-[15px] rotate-180 whitespace-nowrap [writing-mode:vertical-rl]">Vorheriger Termin</span>
          </button>
          <button className={`${tab} right-0 rounded-l-xl text-[#6a7883]`}>
            <Chevron dir="right" size={11} width={2} />
            <span className="mt-[20px] rotate-180 whitespace-nowrap [writing-mode:vertical-rl]">Nächster Termin</span>
          </button>
        </div>
        <div className="mt-[2px] mb-[2px] ml-px flex w-[19px] flex-col bg-[#4f4f4f]">
          <ScrollArrow dir="up" label="Nach oben" />
          <div className="flex-[291]" />
          <div className="h-[30px] border border-[#3b3a39] bg-[#919191]" />
          <div className="flex-[316]" />
          <ScrollArrow dir="down" label="Nach unten" />
        </div>
      </div>
    </main>
  );
}

/* ---------- TASK PANE ---------- */

function TaskPane() {
  return (
    <aside className="flex w-[312px] shrink-0 flex-col border-l border-[#444444] bg-[#666666] text-white">
      <div className="flex h-[22px] items-center justify-end pr-1">
        <button aria-label="Aufgabenliste schließen">
          <CloseIcon />
        </button>
      </div>
      <div className="mr-[31px] ml-[17px]">
        <div className="flex h-[20px] items-center border-b border-[#444444] pt-px pl-[3px] text-[12px] text-[#b5b5b5]">
          <span className="w-[245px] truncate">Anordnen nach: Kennzeichen: Fälligkeits...</span>
          <span className="h-[14px] w-px bg-[#444444]" />
        </div>
        <div className="border-b-2 border-[#c8c6c4] px-[2px] pt-[2px] pb-px">
          <input
            aria-label="Neue Aufgabe eingeben"
            className="block h-[24px] w-full border border-[#444444] bg-[#d4d4d4] px-1 text-[12px] text-black outline-none"
          />
        </div>
        <div className="flex h-[29px] items-center border-b border-[#7a7a7a] bg-[#444444] pt-[3px] pl-[11px] text-[13px] font-bold">
          <Chevron dir="down" size={11} width={1.8} />
          <span className="mr-[11px] ml-[13px]">
            <FlagIcon />
          </span>
          <h2 className="pt-1">Heute</h2>
        </div>
        <ul className="bg-[#d4d4d4] text-[12px] text-[#2b2a29]">
          {TASKS.map((task, i) => (
            <li key={i} className="flex h-[26px] items-center justify-between pr-[5px] pl-[7px]">
              <span className="pt-1">{task}</span>
              <span className="pt-[3px]">
                <FlagIcon />
              </span>
            </li>
          ))}
        </ul>
      </div>
      <div className="mt-auto ml-[11px] h-[299px] border-t border-[#444444]">
        <div className="flex h-[28px] items-center justify-end pt-[2px] pr-1">
          <button aria-label="Kalender schließen">
            <CloseIcon />
          </button>
        </div>
        <div className="flex h-[268px] justify-between pr-[3px]">
          <div className="flex-1 self-start border-b border-[#444444] pt-px pb-[17px] pl-[17px]">
            <MiniMonth
              title="April 2022"
              weeks={APRIL_FULL}
              arrows
              cellClass={(w, d) => {
                if (w === 4 && d === 3) return "bg-[#0072c6] font-bold text-white";
                if ((w === 0 && d < 4) || w === 5 || (w === 4 && d === 6)) return "text-[#cccccc]";
                return "";
              }}
            />
          </div>
          <div className="flex w-[19px] flex-col bg-[#4f4f4f]">
            <ScrollArrow dir="up" label="Nach oben" />
            <div className="h-[203px] border border-[#3b3a39] bg-[#919191]" />
            <div className="flex-1" />
            <ScrollArrow dir="down" label="Nach unten" />
          </div>
        </div>
      </div>
    </aside>
  );
}

/* ---------- STATUS BAR ---------- */

function StatusBar() {
  return (
    <footer className="flex h-[27px] items-center border-t border-[#333333] bg-[#bfbbb8] text-[12px] text-[#2b2a29]">
      <span className="ml-[7px] pt-px">Elemente: 0</span>
      <span className="mr-[24px] ml-auto pt-px">Verbunden</span>
      <button aria-label="Normal" className="flex h-full w-[50px] items-center justify-center bg-[#a09f9d]">
        <svg width="18" height="16" viewBox="0 0 18 16" fill="none" stroke="#2b2a29" strokeWidth="1.4">
          <path d="M0.7 0.7 H17.3 V15.3 H0.7 Z M0.7 3.5 H17.3 M4.5 3.5 V15.3 M13.5 3.5 V15.3" />
        </svg>
      </button>
      <button aria-label="Lesen" className="ml-[16px]">
        <svg width="17" height="17" viewBox="0 0 17 17" fill="none" stroke="#2b2a29" strokeWidth="1.3">
          <path d="M8.5 2.5 C7 1 4 1 0.7 1 V14.5 H6 C7.5 14.5 8 15 8.5 16 C9 15 9.5 14.5 11 14.5 H16.3 V1 C13 1 10 1 8.5 2.5 Z M8.5 2.5 V16" />
          <path d="M2.5 5 H6.5 M2.5 8 H6.5 M2.5 11 H6.5 M10.5 5 H14.5 M10.5 8 H14.5 M10.5 11 H14.5" />
        </svg>
      </button>
      <button aria-label="Verkleinern" className="ml-[24px] flex h-[10px] w-[10px] items-center">
        <span className="h-px w-full bg-[#7a7876]" />
      </button>
      <input
        type="range"
        aria-label="Zoom"
        defaultValue={50}
        className="mx-[6px] h-px w-[125px] appearance-none bg-[#2b2a29] [&::-webkit-slider-thumb]:h-[8px] [&::-webkit-slider-thumb]:w-[2px] [&::-webkit-slider-thumb]:appearance-none [&::-webkit-slider-thumb]:bg-[#2b2a29]"
      />
      <button aria-label="Vergrößern">
        <svg width="10" height="10" viewBox="0 0 10 10" stroke="#7a7876">
          <path d="M0 5.5 H10 M5.5 0 V10" />
        </svg>
      </button>
      <span className="mr-[10px] ml-[18px] pt-px whitespace-nowrap text-[#6f6d6b]">100 %</span>
    </footer>
  );
}

export default function App() {
  return (
    <div className="min-h-screen bg-white pt-[2px] pl-[3px] font-['Open_Sans','Noto_Sans',sans-serif]">
      <TitleBar />
      <Ribbon />
      <InfoBar />
      <div className="relative flex">
        <Sidebar />
        <Calendar />
        <TaskPane />
        <div className="pointer-events-none absolute inset-x-0 top-0 h-2 bg-linear-to-b from-[#3b3a39] to-transparent" />
      </div>
      <StatusBar />
      <div className="flex h-[2px] bg-[#1f3040]">
        <div className="ml-[57px] w-[430px] bg-[#e8e8e8]" />
      </div>
    </div>
  );
}
